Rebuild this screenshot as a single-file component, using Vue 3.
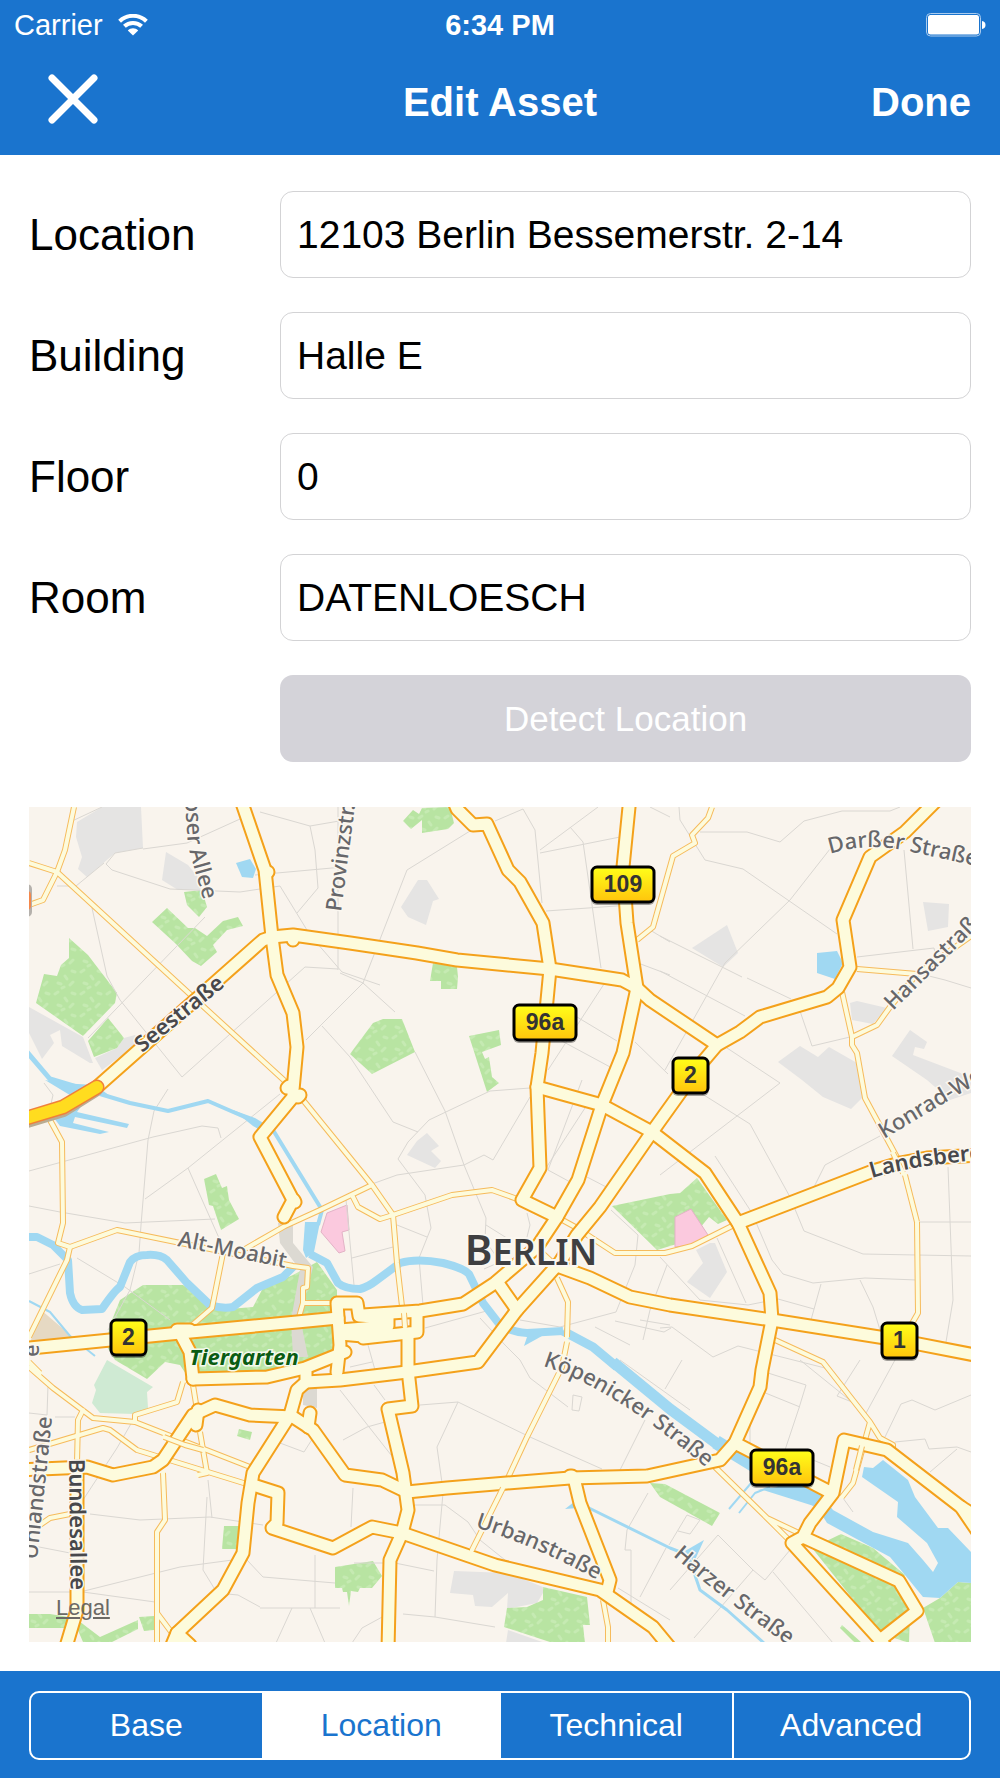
<template>
    <div class="screen">
        <header class="header">
            <div class="status-bar">
                <div class="carrier">
                    <span>Carrier</span>
                    <svg class="wifi" viewBox="0 0 30 22" aria-hidden="true">
                        <path d="M1.6 7.2 C9 0 21 0 28.4 7.2" />
                        <path d="M6.4 12.2 C11 7.8 19 7.8 23.6 12.2" />
                        <path class="dot" d="M9.8 16.4 C12.6 13.6 17.4 13.6 20.2 16.4 L15 21.4 Z" />
                    </svg>
                </div>
                <div class="time">6:34 PM</div>
                <div class="battery">
                    <svg viewBox="0 0 60 24" aria-hidden="true">
                        <rect class="shell" x="0.5" y="0.5" width="54" height="22.5" rx="4" />
                        <rect class="charge" x="2" y="2" width="51" height="19.5" rx="2.5" />
                        <path class="charge" d="M56 8 Q59.5 8.5 59.5 12 Q59.5 15.5 56 16 Z" />
                    </svg>
                </div>
            </div>
            <nav class="nav-bar">
                <button type="button" class="close" aria-label="Close">
                    <svg viewBox="0 0 50 58" aria-hidden="true">
                        <path d="M4 4 L46 46 M46 4 L4 46" />
                    </svg>
                </button>
                <h1>Edit Asset</h1>
                <button type="button" class="done">Done</button>
            </nav>
        </header>

        <main class="content">
            <form class="form" @submit.prevent>
                <div v-for="field in fields" :key="field.id" class="row">
                    <label :for="field.id">{{ field.label }}</label>
                    <input :id="field.id" v-model="field.value" type="text" />
                </div>
                <div class="row">
                    <button type="button" class="detect" disabled>Detect Location</button>
                </div>
            </form>

            <div class="map">
                <svg viewBox="29 807 942 835" role="img" aria-label="Map of Berlin">
                    <defs>
                        <pattern id="grass" width="26" height="22" patternUnits="userSpaceOnUse">
                            <rect width="26" height="22" fill="#b8e4a2" />
                            <path
                                d="M3 4 l3 -2 M13 8 l2 3 M20 3 l3 1 M6 15 l3 1 M18 17 l3 -3 M10 20 l2 -1"
                                stroke="#c5eab2"
                                stroke-width="3"
                                stroke-linecap="round" />
                        </pattern>
                        <linearGradient id="badge" x1="0" y1="0" x2="0" y2="1">
                            <stop offset="0" stop-color="#ffff1a" />
                            <stop offset="1" stop-color="#ffc40c" />
                        </linearGradient>
                        <path v-for="s in streets" :id="s.id" :key="s.id" :d="s.d" />
                    </defs>

                    <rect x="29" y="807" width="942" height="835" fill="#f9f4ed" />
                    <polygon v-for="p in blocks" :key="p" :points="p" fill="#e5e4e3" />
                    <polygon v-for="p in parks" :key="p" :points="p" fill="url(#grass)" />
                    <polygon points="107,1360 153,1387 147,1392 148,1408 135,1414 100,1413 92,1403 96,1390 94,1385" fill="#cfead3" />
                    <polygon points="41,1310 75,1339 30,1343" fill="#e6d9c3" />
                    <polygon v-for="p in pinks" :key="p" :points="p" class="pink" />
                    <path v-for="d in lanes" :key="d" :d="d" class="lane" />
                    <polygon v-for="p in lakes" :key="p" :points="p" class="lake" />
                    <path v-for="w in rivers" :key="w.d" :d="w.d" class="river" :stroke-width="w.width" />
                    <polygon v-for="p in rails" :key="p" :points="p" fill="#dcd9d2" />

                    <path v-for="d in minorRoads" :key="'c' + d" :d="d" class="minor-case" />
                    <path v-for="d in minorRoads" :key="'f' + d" :d="d" class="minor-fill" />
                    <path v-for="d in majorRoads" :key="'c' + d" :d="d" class="major-case" />
                    <path v-for="d in majorRoads" :key="'f' + d" :d="d" class="major-fill" />
                    <path v-for="d in overRoads" :key="'c' + d" :d="d" class="minor-case" />
                    <path v-for="d in overRoads" :key="'f' + d" :d="d" class="minor-fill" />
                    <path d="M20 1122 L63 1109 L95 1089" class="motorway-shadow" />
                    <path d="M20 1120 L63 1107 L97 1087" class="motorway-case" />
                    <path d="M20 1120 L63 1107 L97 1087" class="motorway-fill" />
                    <path d="M27 889 V912" stroke="#b5b1ac" stroke-width="10" stroke-linecap="round" />
                    <path d="M27 895 V906" stroke="#f5874a" stroke-width="8" stroke-linecap="round" />

                    <text v-for="s in streets" :key="s.id" :class="['street', { strong: s.strong }]">
                        <textPath :href="'#' + s.id">{{ s.name }}</textPath>
                    </text>
                    <text x="531" y="1265" class="city"><tspan class="initial">B</tspan>ERLIN</text>
                    <text x="244" y="1365" class="park-name">Tiergarten</text>

                    <g v-for="b in badges" :key="b.x" class="badge">
                        <rect class="badge-shadow" :x="b.x" :y="b.y + 2" :width="b.width" height="37" rx="6" />
                        <rect class="badge-box" :x="b.x + 1" :y="b.y + 1" :width="b.width - 2" height="35" rx="5" />
                        <text :x="b.x + b.width / 2" :y="b.y + 26">{{ b.name }}</text>
                    </g>
                </svg>
                <a href="#legal" class="legal">Legal</a>
            </div>
        </main>

        <footer class="footer">
            <div class="segments">
                <button
                    v-for="tab in tabs"
                    :key="tab"
                    type="button"
                    :class="{ active: tab === activeTab }"
                    @click="activeTab = tab">
                    {{ tab }}
                </button>
            </div>
        </footer>
    </div>
</template>

<script setup>
    import { reactive, ref } from 'vue';

    const fields = reactive([
        { id: 'location', label: 'Location', value: '12103 Berlin Bessemerstr. 2-14' },
        { id: 'building', label: 'Building', value: 'Halle E' },
        { id: 'floor', label: 'Floor', value: '0' },
        { id: 'room', label: 'Room', value: 'DATENLOESCH' },
    ]);

    const tabs = ['Base', 'Location', 'Technical', 'Advanced'];
    const activeTab = ref('Location');

    // Route number signs
    const badges = [
        { name: '109', x: 591, y: 866, width: 64 },
        { name: '96a', x: 513, y: 1004, width: 64 },
        { name: '2', x: 672, y: 1057, width: 37 },
        { name: '1', x: 881, y: 1322, width: 37 },
        { name: '2', x: 110, y: 1319, width: 37 },
        { name: '96a', x: 750, y: 1449, width: 64 },
    ];

    // Street names, each set along its own line
    const streets = [
        { id: 'st-allee', name: 'oser Allee', d: 'M185 799 L188 846 L209 920' },
        { id: 'st-provinz', name: 'Provinzstr.', d: 'M341 912 L357 790' },
        { id: 'st-see', name: 'Seestraße', d: 'M142 1053 L229 983', strong: true },
        { id: 'st-moabit', name: 'Alt-Moabit', d: 'M177 1246 L320 1275' },
        { id: 'st-darss', name: 'Darßer Straße', d: 'M830 854 Q868 842 908 851 T1000 871' },
        { id: 'st-hansa', name: 'Hansastraße', d: 'M893 1011 L1000 905' },
        { id: 'st-konrad', name: 'Konrad-Wolf', d: 'M884 1139 L1000 1070' },
        { id: 'st-lands', name: 'Landsberger', d: 'M872 1178 Q920 1163 1010 1158', strong: true },
        { id: 'st-koep', name: 'Köpenicker Straße', d: 'M543 1366 C600 1384 665 1430 732 1490' },
        { id: 'st-urban', name: 'Urbanstraße', d: 'M475 1527 Q545 1549 615 1590' },
        { id: 'st-harzer', name: 'Harzer Straße', d: 'M673 1556 Q730 1605 810 1661' },
        { id: 'st-uhland', name: 'Uhlandstraße', d: 'M37 1560 L54 1400' },
        { id: 'st-bundes', name: 'Bundesallee', d: 'M69 1459 L71 1620', strong: true },
        { id: 'st-west', name: 'e', d: 'M39 1357 L39 1335' },
    ];

    const blocks = [
        '77,822 102,807 141,807 143,848 115,853 87,877 78,869 82,857 76,837',
        '166,852 188,865 202,882 200,890 178,890 162,880',
        '29,1007 83,1037 93,1063 90,1063 62,1046 60,1030 50,1035 54,1043 42,1059 29,1033',
        '95,1058 117,1048 124,1038 135,1035 140,1042 102,1070',
        '418,880 427,880 439,899 433,901 426,925 408,917 401,907',
        '407,1155 417,1141 427,1133 439,1146 431,1151 441,1161 435,1168',
        '692,948 727,925 738,953 723,967',
        '923,902 949,904 948,927 928,931',
        '850,1003 857,1001 887,1008 873,1024 852,1020',
        '778,1062 800,1046 818,1057 829,1047 857,1063 863,1097 851,1109 823,1097 802,1080',
        '910,1030 927,1042 924,1049 915,1047 913,1055 971,1077 971,1093 950,1100 927,1080 892,1056',
        '710,1243 715,1243 727,1272 710,1298 687,1282 703,1263 696,1250',
        '454,1571 508,1573 543,1587 543,1593 537,1603 507,1609 508,1593 492,1607 475,1606 473,1595 450,1593',
        '508,1630 545,1643 506,1643',
    ];

    const parks = [
        '69,938 88,955 117,993 115,1003 83,1036 36,1003 44,974 57,976 61,965 69,958',
        '108,1018 124,1038 117,1048 94,1057 88,1041',
        '167,908 188,928 195,928 207,936 223,921 238,917 243,926 227,930 213,945 217,952 201,966 192,961 176,944 152,922',
        '184,892 202,890 207,907 199,917 187,905',
        '403,821 413,810 419,814 422,808 450,807 454,823 448,829 422,833 422,820 411,829',
        '433,963 457,967 458,977 457,989 441,989 441,981 430,981',
        '383,1019 402,1019 415,1052 372,1074 350,1054 373,1023',
        '469,1036 499,1030 501,1045 482,1052 485,1059 489,1057 492,1077 499,1083 487,1092',
        '204,1179 216,1174 222,1188 227,1186 229,1200 239,1219 221,1230 213,1206 209,1205',
        '143,1285 183,1285 217,1310 253,1307 263,1288 293,1275 317,1262 337,1290 337,1357 270,1378 190,1380 180,1365 165,1362 147,1379 115,1360 106,1345 110,1325 120,1300',
        '612,1206 670,1194 680,1193 697,1178 727,1220 718,1224 709,1217 690,1240 657,1250',
        '239,1429 252,1432 250,1440 237,1436',
        '224,1526 239,1526 237,1549 222,1549',
        '29,1614 50,1614 75,1618 100,1637 138,1620 138,1629 112,1642 83,1642 77,1628 29,1628',
        '139,1617 154,1616 154,1630 144,1631',
        '335,1567 373,1561 382,1576 372,1588 360,1588 358,1592 351,1591 349,1606 347,1592 343,1592 342,1588 335,1588',
        '543,1587 587,1597 590,1625 583,1625 585,1643 553,1643 504,1627 507,1608 527,1607 543,1600',
        '650,1483 665,1484 720,1513 712,1526 660,1497',
        '812,1548 841,1534 873,1548 905,1575 900,1585 910,1610 909,1643 880,1633',
        '958,1582 971,1583 971,1643 935,1643 923,1608 940,1598',
        '842,1625 862,1643 855,1643 840,1628',
    ];

    const pinks = [
        '675,1217 691,1209 708,1235 692,1245 675,1247',
        '321,1232 327,1213 347,1205 349,1230 342,1232 345,1251 339,1253',
    ];

    const rails = [
        '278,1223 293,1223 293,1243 313,1267 300,1317 308,1357 293,1357 291,1320 300,1270 280,1243',
        '303,1388 317,1388 317,1408 303,1405',
    ];

    const lakes = [
        '236,863 250,859 256,869 253,878 242,877',
        '817,953 837,951 843,963 835,979 817,973',
        '45,1080 60,1083 95,1085 110,1096 90,1094 77,1112 103,1118 129,1124 127,1128 75,1117 73,1123 109,1132 100,1134 60,1126 54,1118 78,1100',
        '305,1222 320,1222 314,1252 306,1258 303,1250',
        '233,1110 255,1118 275,1130 270,1136 253,1126',
        '757,1490 790,1485 823,1497 833,1510 873,1532 908,1543 923,1560 933,1572 938,1563 927,1543 897,1517 898,1502 862,1477 864,1467 873,1468 883,1460 908,1480 915,1497 938,1528 948,1528 971,1552 971,1583 958,1582 940,1598 923,1597 905,1575 890,1557 827,1523 817,1507 763,1490',
        '524,1346 528,1334 542,1336',
        '565,1509 574,1502 578,1508',
        '685,1551 704,1540 694,1562',
    ];

    const rivers = [
        { width: 8, d: 'M29 1237 L37 1237 L53 1245 L68 1260 L70 1293 Q73 1307 82 1310 L102 1309 Q115 1290 120 1287 L130 1262 Q135 1255 147 1255 Q160 1254 167 1260 L187 1283 L210 1305 Q222 1309 233 1307 L257 1288 L283 1277 L295 1265' },
        { width: 8, d: 'M310 1254 L327 1263 L338 1283 Q345 1289 360 1289 Q368 1287 377 1280 L400 1263 Q417 1258 443 1263 Q463 1268 469 1274 L483 1303 L500 1325 Q512 1332 527 1333 L563 1331' },
        { width: 9, d: 'M563 1331 L593 1347 L617 1367' },
        { width: 11, d: 'M613 1362 L670 1409 L720 1446' },
        { width: 14, d: 'M716 1442 L765 1472 L825 1504' },
        { width: 4, d: 'M100 1094 L130 1103 L168 1111 L208 1101 L247 1118 L273 1130 L322 1210 L318 1225' },
        { width: 5, d: 'M27 1052 L50 1079 L80 1088' },
        { width: 3, d: 'M587 1507 L670 1548 L688 1555 L700 1590 L727 1610 L764 1643' },
        { width: 2, d: 'M29 1301 L50 1312 L70 1336 L95 1356' },
        { width: 2, d: 'M729 1509 L752 1482 M739 1513 L755 1493 L770 1487' },
    ];

    // Faint residential streets
    const lanes = [
        'M70 822 L102 807 M143 849 L187 843 L240 819',
        'M106 864 L115 853 L143 848 M106 864 L112 870 L170 889 L240 892 L280 886 L310 935 L342 972 L380 985',
        'M57 886 L76 886 L104 863 M92 908 L107 976 L120 1000 L182 1077',
        'M260 812 L310 826 L315 850 L318 888 L297 913 M255 875 L343 867',
        'M338 807 L338 970 M205 917 L88 1038 M310 826 L345 820',
        'M182 1077 L305 967 L338 969 M168 1089 L154 1111 L148 1140 L141 1225 L139 1253 L130 1290 L108 1330',
        'M306 1040 L350 996 L363 983 L407 870 L470 831 M363 983 L395 1012',
        'M322 1026 L350 1057 L393 1122 L418 1132',
        'M340 973 L363 983 M415 1052 L445 1111 L464 1165 L486 1218 L485 1240 L500 1262',
        'M495 821 L523 809 L535 830 L542 903 M540 853 L620 837 M540 850 L598 807 M570 827 L583 842 L601 968',
        'M546 911 L630 905 M604 984 L548 1070 M560 1040 L612 1068 M577 1017 L617 1041 M635 1042 L668 1074',
        'M638 963 L670 975 M650 930 L670 942 M650 807 L670 817',
        'M679 807 L680 820 L705 860 L743 869 L837 934 M700 832 L747 832 L780 842 L804 821 L842 811 L890 811 L900 807',
        'M830 849 L790 900 L725 963 L665 1070 M660 936 L742 977 M747 978 L791 999 M660 971 L745 1016 M800 1011 L812 1046 L850 1037',
        'M904 850 L913 949 M857 957 L934 948 L936 958 M917 973 L945 980 L971 988',
        'M727 1048 L780 1083 L660 1175 M680 1080 L750 1124 L790 1197 L804 1231 L863 1254 L971 1256',
        'M715 1156 L752 1213 L772 1260 L783 1274 L813 1283 L865 1278 L917 1280 M814 1187 L825 1165 L880 1136',
        'M919 1222 L971 1222 M948 1167 L953 1300 L946 1342 M860 1280 L873 1307 L880 1330 M821 1284 L811 1320',
        'M660 1257 L700 1300 L748 1305 L778 1299 L814 1309 M717 1238 L746 1303 M660 1328 L672 1327 L713 1357 L738 1346 L825 1368',
        'M29 1171 L153 1137 L202 1126 L218 1128 L221 1138 M29 1206 L60 1212 L125 1223 L215 1219',
        'M145 1199 L188 1168 L280 1094 M188 1168 L219 1238 M29 1274 L60 1264 M77 1258 L125 1287 L170 1320 M44 1083 L53 1095 L48 1117',
        'M372 1184 L397 1175 L464 1165 L484 1155 L493 1160 L530 1097 M398 1159 L408 1142 L429 1120 L490 1091 L530 1088',
        'M398 1159 L425 1195 L431 1228 L419 1258 L423 1305 M397 1225 L427 1237 M352 1258 L393 1247 M346 1200 L354 1285',
        'M486 1225 L510 1240 M527 1213 L530 1225 L525 1245 M582 1080 L548 1170 L572 1183 M587 1177 L612 1190 M546 1168 L585 1108',
        'M611 1210 L638 1235 L635 1265 L616 1312 L560 1327 L520 1320 M667 1265 L650 1310 L643 1340 M615 1321 L664 1332 L671 1328',
        'M480 1318 L505 1345 L520 1360 L530 1378 L568 1407 M350 1367 L372 1362 M368 1345 L375 1370 M425 1328 L490 1310',
        'M420 1405 L458 1402 L530 1437 L602 1469 M458 1402 L437 1447 L443 1490 M340 1390 L395 1460 M343 1440 L367 1427 L385 1422 M374 1385 L385 1400',
        'M443 1493 L437 1560 L435 1617 M415 1505 L445 1505 L468 1522 L480 1540 L505 1560 M353 1488 L351 1527',
        'M354 1563 L395 1563 L434 1571 M403 1614 L435 1617 L495 1627 M352 1643 L362 1628 L395 1610 M315 1555 L315 1608 M260 1608 L340 1608',
        'M90 1514 L140 1520 L210 1517 L263 1525 M29 1592 L80 1592 L180 1567 L240 1559 M83 1592 L155 1602 M29 1545 L70 1553',
        'M208 1480 L212 1518 M207 1497 L203 1570 L217 1593 L238 1595 L260 1607 M247 1560 L263 1577 L335 1583 M292 1608 L276 1643 M310 1608 L325 1643',
        'M280 1443 L304 1452 L318 1430 M132 1422 L117 1448 L83 1500 M48 1385 L47 1415 L29 1413 M55 1417 L75 1417',
        'M645 1420 L620 1470 M648 1493 L627 1530 L625 1550 L631 1550 L631 1603 M666 1548 L640 1597 M618 1588 L670 1620',
        'M768 1373 L806 1385 L799 1408 L795 1420 L785 1450 M763 1392 L800 1407 M800 1360 L852 1402 L837 1396 L860 1360 M865 1415 L895 1360',
        'M885 1437 L901 1404 L912 1400 L935 1410 L971 1395 M895 1442 L925 1439 L929 1449 L957 1447 L971 1452 M930 1472 L957 1449',
        'M718 1535 L753 1570 L694 1638 M718 1535 L670 1590 M753 1570 L765 1580 L790 1550 M773 1572 L833 1643 M669 1545 L687 1515 L700 1520 L690 1534 L678 1531',
        'M573 1395 L582 1397 L579 1411 L572 1410 Z M620 1360 L655 1385 L690 1410 M665 1389 L682 1360 M830 1480 L853 1512',
        'M750 1450 L750 1420 M813 1460 L830 1467 M640 1320 L670 1325 M595 1327 L630 1345 M484 1269 L500 1262',
    ];

    const minorRoads = [
        'M74 807 L65 850 L57 872 L43 900 L29 905',
        'M29 863 L57 872 L193 997 L287 1083 L303 1100 L372 1185 L393 1215 L397 1263 L403 1315',
        'M393 1215 L452 1195 L492 1190 L520 1200',
        'M372 1185 L320 1210 L285 1226 L245 1249 M352 1195 L358 1207 L380 1219 L393 1215',
        'M70 1247 L117 1230 L293 1266 L308 1268 L307 1287 L303 1288 L303 1303 L299 1317 M303 1303 L332 1303',
        'M50 1120 L62 1142 L63 1223 L58 1243 L70 1247 L67 1260 L29 1337',
        'M223 1253 L212 1308 L190 1327',
        'M557 1278 L568 1302 L567 1337',
        'M567 1342 L562 1367 L527 1437 L507 1480',
        'M712 807 L708 818 L692 835 L695 843 L673 856 L653 927 L637 940',
        'M857 969 L917 974 L971 936 M917 974 L890 1007 L877 1025 L852 1037',
        'M842 992 L852 1037 L852 1045 L857 1053 L865 1098 L900 1163',
        'M917 1222 L918 1313 L910 1327',
        'M557 1217 L577 1228 L592 1238 L615 1253 L665 1253 L692 1246 L738 1223',
        'M775 1340 L823 1362 L870 1422 L880 1438 L893 1445 L893 1455 M870 1422 L853 1483 L842 1497',
        'M715 1467 L767 1518 L792 1543 M767 1518 L803 1535',
        'M29 1367 L53 1388 L93 1418 L135 1422 L250 1467 M83 1410 L78 1420 L77 1462',
        'M29 1450 L103 1428 L110 1430 L137 1450 L250 1485',
        'M135 1422 L135 1415 L177 1402 L183 1382 M193 1385 L197 1410',
        'M200 1432 L207 1473 L198 1475',
        'M163 1473 L165 1520 L157 1532 L157 1643 M157 1613 L175 1637',
        'M37 1527 L50 1518 L70 1514',
        'M603 1600 L608 1627 L608 1643 M29 1362 L40 1373',
        'M539 1250 L552 1262',
    ];

    // Minor roads drawn across the main ones
    const overRoads = [
        'M905 1175 L917 1222',
        'M893 1153 L903 1173',
        'M503 1488 L472 1550',
        'M164 1437 L185 1445 L203 1450',
        'M404 1313 L405 1327',
        'M862 1446 L856 1470',
    ];

    const majorRoads = [
        'M241 800 L265 870 L272 937 L277 975 L293 1013 L297 1047 L293 1090 L293 1097 L260 1137 L293 1200 L284 1217',
        'M289 1086 L287 1088 M298 1097 L300 1095 M294 1200 L295 1202 M266 872 L268 872 M293 936 L293 940',
        'M97 1087 L263 940 L272 937 L293 935 L350 943 L417 953 L457 960 L550 969 L622 980 L637 988 L650 1000 L717 1045',
        'M452 797 L457 809 L473 825 L487 824 L508 870 L520 882 L543 923 L550 969 L542 1053 L537 1087 L540 1168 L522 1200 L557 1217',
        'M630 797 L623 867 L627 923 L637 988 L623 1053 L602 1105 L578 1180 L557 1217 L537 1247 L495 1283 L463 1304 L420 1311 L363 1315',
        'M537 1087 L602 1105 L652 1132 L705 1173 L738 1223 L770 1293 L772 1320 L762 1370 L760 1387 L735 1443 L720 1460 L697 1465 L647 1476 L570 1478 L507 1483 L447 1488 L407 1492 L382 1480 L345 1475 L313 1430 L293 1417 L250 1415 L215 1405 L193 1415 L163 1460 L153 1467 L113 1475 L87 1467 L20 1470',
        'M940 797 L905 832 L870 857 L843 920 L850 967 L838 988 L827 997 L760 1017 L740 1032 L717 1045 L700 1065 L652 1132 L600 1207 L577 1235 L560 1262 L517 1310 L478 1362 L407 1372 L340 1380 L306 1382',
        'M193 1379 L267 1377 L305 1368 L345 1352',
        'M20 1349 L180 1333 L297 1322 L338 1318',
        'M180 1333 L190 1352 L193 1379 M177 1330 L190 1330',
        'M306 1372 L306 1382 L297 1390 L290 1415 L253 1473 L248 1503 L243 1553 L223 1590 L177 1633 L172 1645',
        'M177 1633 L190 1645',
        'M253 1485 L278 1493 L277 1523 L272 1528 L333 1548 L372 1527 L402 1533 L495 1565 L600 1590 L653 1627 L672 1650',
        'M308 1427 L310 1413 M198 1410 L196 1425',
        'M408 1337 L408 1370 L412 1406 L388 1409 L403 1473 L408 1510 L402 1533 L390 1560 L388 1650',
        'M570 1476 L572 1476 M575 1482 L580 1503 L610 1580 L607 1592',
        'M560 1267 L590 1278 L630 1297 L670 1305 L772 1320 L898 1340 L980 1356',
        'M498 1283 L517 1310',
        'M738 1223 L873 1171 L900 1163 L927 1158 L980 1155',
        'M735 1443 L830 1492',
        'M980 1535 L961 1507 L887 1450 L844 1440 L833 1493 L810 1523 L803 1537 L792 1543 L880 1640 L917 1611 L899 1581 L803 1537',
        'M961 1507 L985 1522',
        'M880 1640 L890 1652',
        'M77 1467 L77 1610 L65 1650',
        'M340 1345 L337 1303 L357 1303 L359 1316 L388 1318 L388 1326 L340 1330 M363 1338 L417 1332 L417 1312 M340 1345 L337 1372 M340 1334 L363 1336',
    ];
</script>

<style>
    html,
    body {
        margin: 0;
        background: #fff;
    }
</style>

<style scoped>
    .screen {
        display: flex;
        flex-direction: column;
        min-height: 100vh;
        font-family: 'Liberation Sans', Arial, sans-serif;
        color: #000;
        background: #fff;
    }

    button,
    input {
        box-sizing: border-box;
        margin: 0;
        font-family: inherit;
    }

    .header {
        color: #fff;
        background: #1a74ce;
    }

    .status-bar {
        display: grid;
        grid-template-columns: 1fr auto 1fr;
        align-items: center;
        height: 50px;
        padding: 0 14px;
        font-size: 29px;
    }

    .carrier {
        display: flex;
        align-items: center;
        gap: 15px;
    }

    .wifi {
        width: 30px;
        height: 22px;
        fill: none;
        stroke: #fff;
        stroke-width: 4;
    }

    .wifi .dot {
        fill: #fff;
        stroke: none;
    }

    .time {
        font-weight: bold;
    }

    .battery {
        display: flex;
        justify-content: flex-end;
    }

    .battery svg {
        width: 60px;
        height: 24px;
    }

    .shell {
        fill: none;
        stroke: #a9cbee;
    }

    .charge {
        fill: #fff;
    }

    .nav-bar {
        display: grid;
        grid-template-columns: 1fr auto 1fr;
        align-items: center;
        height: 105px;
        padding: 0 29px;
    }

    .nav-bar h1 {
        margin: 0;
        font-size: 40px;
        font-weight: bold;
    }

    .close,
    .done {
        padding: 0;
        border: 0;
        color: #fff;
        background: none;
    }

    .close {
        justify-self: start;
        padding-left: 19px;
    }

    .close svg {
        display: block;
        width: 50px;
        height: 58px;
        fill: none;
        stroke: #fff;
        stroke-width: 7;
        stroke-linecap: round;
    }

    .done {
        justify-self: end;
        font-size: 40px;
        font-weight: bold;
    }

    .content {
        flex: 1;
        padding: 36px 29px 29px;
    }

    .form {
        display: flex;
        flex-direction: column;
        gap: 34px;
        margin-bottom: 45px;
    }

    .row {
        display: grid;
        grid-template-columns: 251px 1fr;
        align-items: center;
    }

    .row label {
        font-size: 44px;
    }

    .row input {
        width: 100%;
        height: 87px;
        padding: 0 16px;
        border: 1px solid #d3d3d5;
        border-radius: 13px;
        font-size: 39px;
        color: #000;
        background: #fff;
    }

    .detect {
        grid-column: 2;
        height: 87px;
        border: 0;
        border-radius: 13px;
        font-size: 35px;
        color: #fff;
        background: #d4d3d9;
    }

    .map {
        position: relative;
        overflow: hidden;
    }

    .map svg {
        display: block;
        width: 100%;
    }

    .map path {
        fill: none;
        stroke-linejoin: round;
    }

    .pink {
        fill: #fbc9de;
        stroke: #e3b3c6;
    }

    .lane {
        stroke: #dad7d2;
        stroke-width: 1;
    }

    .lake {
        fill: #a0d8f2;
    }

    .river {
        stroke: #a0d8f2;
    }

    .minor-case {
        stroke: #f6bb5c;
        stroke-width: 6;
    }

    .minor-fill {
        stroke: #fdfbdc;
        stroke-width: 4;
        stroke-linecap: round;
    }

    .major-case {
        stroke: #f4a11b;
        stroke-width: 15;
        stroke-linecap: round;
    }

    .major-fill {
        stroke: #fdfbdc;
        stroke-width: 11;
        stroke-linecap: round;
    }

    .motorway-shadow {
        stroke: #b9ac93;
        stroke-width: 16;
        stroke-linecap: round;
    }

    .motorway-case {
        stroke: #f0803a;
        stroke-width: 15;
        stroke-linecap: round;
    }

    .motorway-fill {
        stroke: #ffdc1f;
        stroke-width: 12;
        stroke-linecap: round;
    }

    .street {
        font-family: 'Noto Sans', 'Open Sans', sans-serif;
        font-size: 22px;
        font-weight: 500;
        fill: #67676a;
        stroke: #fbf7f0;
        stroke-width: 3;
        paint-order: stroke;
    }

    .street.strong {
        font-weight: 600;
        fill: #48484b;
    }

    .city {
        font-family: 'Noto Sans', 'Open Sans', sans-serif;
        font-size: 36px;
        font-weight: 600;
        text-anchor: middle;
        fill: #3f3f41;
        stroke: #fbf7f0;
        stroke-width: 4;
        paint-order: stroke;
    }

    .city .initial {
        font-size: 42px;
    }

    .park-name {
        font-family: 'Noto Sans', 'Open Sans', sans-serif;
        font-size: 22px;
        font-style: italic;
        font-weight: bold;
        text-anchor: middle;
        fill: #0a5c12;
        stroke: #f4faee;
        stroke-width: 3;
        paint-order: stroke;
    }

    .badge-shadow {
        fill: #000;
        opacity: 0.35;
    }

    .badge-box {
        fill: url(#badge);
        stroke: #000;
        stroke-width: 3;
    }

    .badge text {
        font-size: 23px;
        font-weight: bold;
        text-anchor: middle;
        fill: #333;
    }

    .legal {
        position: absolute;
        bottom: 21px;
        left: 27px;
        font-size: 22px;
        color: #6b6965;
    }

    .footer {
        padding: 20px 29px 18px;
        background: #1a74ce;
    }

    .segments {
        display: grid;
        grid-template-columns: 231fr 238fr 233fr 238fr;
        overflow: hidden;
        border: 2px solid #fff;
        border-radius: 10px;
    }

    .segments button {
        height: 65px;
        padding: 0;
        border: 0;
        font-size: 32px;
        color: #fff;
        background: none;
    }

    .segments button + button {
        border-left: 2px solid #fff;
    }

    .segments .active {
        color: #1a74ce;
        background: #fff;
    }
</style>
